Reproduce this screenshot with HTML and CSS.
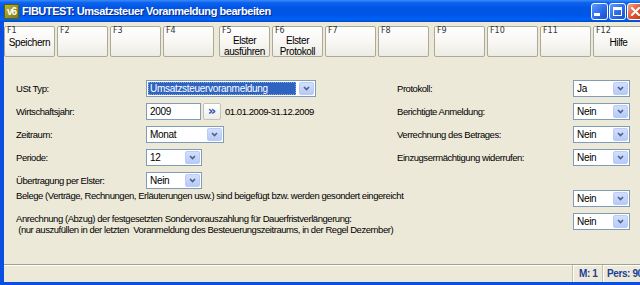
FILE: index.html
```html
<!DOCTYPE html>
<html lang="de">
<head>
<meta charset="utf-8">
<title>FIBUTEST: Umsatzsteuer Voranmeldung bearbeiten</title>
<link rel="stylesheet" href="styles.css">
</head>
<body>
<div class="window">
  <div class="titlebar">
    <div class="appicon">v6</div>
    <div class="title">FIBUTEST: Umsatzsteuer Voranmeldung bearbeiten</div>
    <div class="winbtns">
      <div class="wb"><span class="min-bar"></span></div>
      <div class="wb"><span class="max-box"></span></div>
      <div class="wb close"><svg width="9" height="9" viewBox="0 0 9 9"><path d="M1 1L8 8M8 1L1 8" stroke="#fff" stroke-width="2" stroke-linecap="square"/></svg></div>
    </div>
  </div>
  <div class="frame">
    <div class="toolbar">
      <div class="group">
        <div class="fkey"><span class="key">F1</span><span class="cap one">Speichern</span></div>
        <div class="fkey"><span class="key">F2</span></div>
        <div class="fkey"><span class="key">F3</span></div>
        <div class="fkey"><span class="key">F4</span></div>
      </div>
      <div class="group">
        <div class="fkey"><span class="key">F5</span><span class="cap">Elster<br>ausführen</span></div>
        <div class="fkey"><span class="key">F6</span><span class="cap">Elster<br>Protokoll</span></div>
        <div class="fkey"><span class="key">F7</span></div>
        <div class="fkey"><span class="key">F8</span></div>
      </div>
      <div class="group">
        <div class="fkey"><span class="key">F9</span></div>
        <div class="fkey"><span class="key">F10</span></div>
        <div class="fkey"><span class="key">F11</span></div>
        <div class="fkey"><span class="key">F12</span><span class="cap one">Hilfe</span></div>
      </div>
    </div>

    <div class="form">
      <div class="fields">
        <div class="lbl">USt Typ:</div>
        <div class="ctl">
          <div class="combo w170 focus"><span class="val"><span class="sel">Umsatzsteuervoranmeldung</span></span><span class="drop"><svg width="7" height="5" viewBox="0 0 7 5"><path d="M1 1L3.5 3.5L6 1" fill="none" stroke="#4D6185" stroke-width="1.6"/></svg></span></div>
        </div>
        <div class="lbl">Protokoll:</div>
        <div class="ctl">
          <div class="combo w57"><span class="val">Ja</span><span class="drop"><svg width="7" height="5" viewBox="0 0 7 5"><path d="M1 1L3.5 3.5L6 1" fill="none" stroke="#4D6185" stroke-width="1.6"/></svg></span></div>
        </div>

        <div class="lbl">Wirtschaftsjahr:</div>
        <div class="ctl">
          <div class="textbox">2009</div>
          <div class="nextbtn">»</div>
          <span class="range">01.01.2009-31.12.2009</span>
        </div>
        <div class="lbl">Berichtigte Anmeldung:</div>
        <div class="ctl">
          <div class="combo w57"><span class="val">Nein</span><span class="drop"><svg width="7" height="5" viewBox="0 0 7 5"><path d="M1 1L3.5 3.5L6 1" fill="none" stroke="#4D6185" stroke-width="1.6"/></svg></span></div>
        </div>

        <div class="lbl">Zeitraum:</div>
        <div class="ctl">
          <div class="combo w78"><span class="val">Monat</span><span class="drop"><svg width="7" height="5" viewBox="0 0 7 5"><path d="M1 1L3.5 3.5L6 1" fill="none" stroke="#4D6185" stroke-width="1.6"/></svg></span></div>
        </div>
        <div class="lbl">Verrechnung des Betrages:</div>
        <div class="ctl">
          <div class="combo w57"><span class="val">Nein</span><span class="drop"><svg width="7" height="5" viewBox="0 0 7 5"><path d="M1 1L3.5 3.5L6 1" fill="none" stroke="#4D6185" stroke-width="1.6"/></svg></span></div>
        </div>

        <div class="lbl">Periode:</div>
        <div class="ctl">
          <div class="combo w56"><span class="val">12</span><span class="drop"><svg width="7" height="5" viewBox="0 0 7 5"><path d="M1 1L3.5 3.5L6 1" fill="none" stroke="#4D6185" stroke-width="1.6"/></svg></span></div>
        </div>
        <div class="lbl">Einzugsermächtigung widerrufen:</div>
        <div class="ctl">
          <div class="combo w57"><span class="val">Nein</span><span class="drop"><svg width="7" height="5" viewBox="0 0 7 5"><path d="M1 1L3.5 3.5L6 1" fill="none" stroke="#4D6185" stroke-width="1.6"/></svg></span></div>
        </div>

        <div class="lbl">Übertragung per Elster:</div>
        <div class="ctl">
          <div class="combo w56"><span class="val">Nein</span><span class="drop"><svg width="7" height="5" viewBox="0 0 7 5"><path d="M1 1L3.5 3.5L6 1" fill="none" stroke="#4D6185" stroke-width="1.6"/></svg></span></div>
        </div>
      </div>

      <div class="extra">
        <div class="longlbl">Belege (Verträge, Rechnungen, Erläuterungen usw.) sind beigefügt bzw. werden gesondert eingereicht</div>
        <div class="combo w57"><span class="val">Nein</span><span class="drop"><svg width="7" height="5" viewBox="0 0 7 5"><path d="M1 1L3.5 3.5L6 1" fill="none" stroke="#4D6185" stroke-width="1.6"/></svg></span></div>
        <div class="longlbl">Anrechnung (Abzug) der festgesetzten Sondervorauszahlung für Dauerfristverlängerung:<br>&nbsp;(nur auszufüllen in der letzten&nbsp; Voranmeldung des Besteuerungszeitraums, in der Regel Dezember)</div>
        <div class="combo w57"><span class="val">Nein</span><span class="drop"><svg width="7" height="5" viewBox="0 0 7 5"><path d="M1 1L3.5 3.5L6 1" fill="none" stroke="#4D6185" stroke-width="1.6"/></svg></span></div>
      </div>
    </div>

    <div class="statusbar">
      <div class="panel m">M: 1</div>
      <div class="panel pers">Pers: 90</div>
    </div>
  </div>
</div>
</body>
</html>
```
FILE: styles.css
```css
* { box-sizing: border-box; }
html, body { margin: 0; padding: 0; }
body {
  width: 640px;
  height: 285px;
  overflow: hidden;
  background: #ECE9D8;
  font-family: "Liberation Sans", Arial, sans-serif;
  font-size: 9.5px;
  letter-spacing: -0.45px;
  color: #000;
}
.window {
  width: 648px;
  height: 285px;
  display: flex;
  flex-direction: column;
}
.titlebar {
  height: 22px;
  flex: none;
  display: flex;
  align-items: center;
  padding: 0 4px 0 4px;
  background: linear-gradient(#3B8CF8 0%, #0D63EE 12%, #0055E5 35%, #0056E8 70%, #0063F7 88%, #0049CF 100%);
}
.appicon {
  flex: none;
  width: 15px;
  height: 15px;
  background: linear-gradient(135deg, #B9B436, #7D7A12);
  border: 1px solid #5E5C0E;
  color: #fff;
  font: bold 10px/13px "Liberation Sans", sans-serif;
  letter-spacing: -1px;
  text-align: center;
  margin-right: 3px;
}
.title {
  color: #fff;
  font-family: "Liberation Sans", sans-serif;
  font-weight: bold;
  font-size: 11px;
  letter-spacing: -0.45px;
  text-shadow: 1px 1px 0 #0A2A8A;
  white-space: nowrap;
}
.winbtns {
  margin-left: auto;
  display: flex;
  gap: 1px;
}
.wb {
  width: 17px;
  height: 17px;
  border: 1px solid #fff;
  border-radius: 3px;
  background: linear-gradient(135deg, #5B9BFF, #2A66E8 60%, #1A4FD0);
  display: flex;
  align-items: center;
  justify-content: center;
}
.min-bar {
  width: 6px;
  height: 3px;
  background: #fff;
  align-self: flex-end;
  margin: 0 5px 3px 0;
}
.max-box {
  width: 9px;
  height: 9px;
  border: 1px solid #fff;
  border-top-width: 3px;
}
.wb.close { background: linear-gradient(135deg, #F3A487, #E0512B 55%, #C23A15); }

.frame {
  flex: 1;
  display: flex;
  flex-direction: column;
  border-left: 4px solid #0B4FE0;
  border-bottom: 3px solid #0B4FE0;
}
.toolbar {
  height: 36px;
  flex: none;
  display: flex;
  gap: 5px;
  padding: 4px 0 1px 0;
  font-size: 10px;
  letter-spacing: -0.4px;
}
.group { display: flex; gap: 2px; }
.fkey {
  width: 51px;
  height: 31px;
  border: 1px solid #ADA999;
  border-radius: 2px;
  background: linear-gradient(#FFFFFF 0%, #F8F7F3 50%, #ECEBE4 100%);
  display: flex;
  flex-direction: column;
}
.fkey .key {
  align-self: flex-start;
  padding-left: 2px;
  font: 8px/8px "DejaVu Sans", sans-serif;
  letter-spacing: 0;
  color: #333;
}
.fkey .cap {
  text-align: center;
  line-height: 11px;
}
.fkey .cap.one { padding-top: 2px; }

.form {
  flex: 1;
  padding: 22px 0 0 12px;
}
.fields {
  display: grid;
  grid-template-columns: 130px 251px 176px 57px;
  grid-template-rows: repeat(5, 17px);
  row-gap: 6px;
  align-items: center;
}
.lbl { white-space: nowrap; }
.ctl { display: flex; align-items: center; gap: 2px; height: 17px; }

.combo {
  display: flex;
  height: 17px;
  border: 1px solid #7F9DB9;
  background: #fff;
  font-size: 10px;
  letter-spacing: -0.3px;
}
.w170 { width: 170px; }
.w78 { width: 78px; }
.w57 { width: 57px; }
.w56 { width: 56px; }
.combo .val {
  flex: 1;
  padding-left: 3px;
  line-height: 15px;
  white-space: nowrap;
  overflow: hidden;
}
.combo.focus .val { padding: 1px 2px 1px 1px; line-height: 13px; }
.combo .sel {
  display: block;
  background: #2F63C2;
  color: #fff;
  padding-left: 2px;
  outline: 1px dotted #8DA6D8;
  outline-offset: -1px;
}
.combo .drop {
  width: 15px;
  margin: 1px;
  border: 1px solid #BACBF5;
  border-radius: 2px;
  background: linear-gradient(#D2DFFD, #B7CAF7);
  display: flex;
  align-items: center;
  justify-content: center;
}
.textbox {
  width: 55px;
  height: 17px;
  border: 1px solid #7F9DB9;
  background: #fff;
  padding-left: 3px;
  line-height: 15px;
  font-size: 10px;
  letter-spacing: -0.3px;
}
.nextbtn {
  width: 18px;
  height: 17px;
  border: 1px solid #C4C1B5;
  border-radius: 2px;
  background: linear-gradient(#FFFFFF, #EEEDE6);
  color: #2A4FB8;
  font: bold 13px/13px "DejaVu Sans", sans-serif;
  letter-spacing: 0;
  text-align: center;
}
.range { margin-left: 2px; }

.extra {
  display: grid;
  grid-template-columns: 557px 57px;
  row-gap: 6px;
  margin-top: 1px;
}
.longlbl {
  align-self: start;
  line-height: 11px;
  white-space: nowrap;
}

.statusbar {
  height: 18px;
  flex: none;
  display: flex;
  justify-content: flex-end;
  border-top: 1px solid #A3A08F;
  box-shadow: inset 0 1px 0 #FFFFFF;
}
.panel {
  border-left: 1px solid #C4C1B2;
  box-shadow: inset 1px 0 0 #FFFFFF;
  padding: 2px 0 0 4px;
  font-size: 10px;
  font-weight: bold;
  letter-spacing: -0.4px;
  color: #1B3D9A;
  line-height: 14px;
  white-space: nowrap;
  overflow: hidden;
}
.panel.m { width: 30px; padding-left: 6px; }
.panel.pers { width: 46px; }
```
